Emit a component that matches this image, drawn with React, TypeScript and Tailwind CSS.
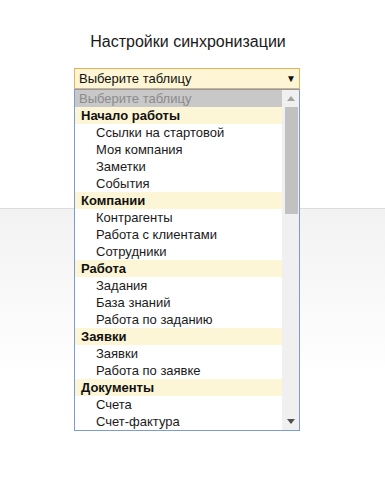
import React from "react";

type Row = { label: string; kind: "placeholder" | "group" | "item" };

const rows: Row[] = [
  { label: "Выберите таблицу", kind: "placeholder" },
  { label: "Начало работы", kind: "group" },
  { label: "Ссылки на стартовой", kind: "item" },
  { label: "Моя компания", kind: "item" },
  { label: "Заметки", kind: "item" },
  { label: "События", kind: "item" },
  { label: "Компании", kind: "group" },
  { label: "Контрагенты", kind: "item" },
  { label: "Работа с клиентами", kind: "item" },
  { label: "Сотрудники", kind: "item" },
  { label: "Работа", kind: "group" },
  { label: "Задания", kind: "item" },
  { label: "База знаний", kind: "item" },
  { label: "Работа по заданию", kind: "item" },
  { label: "Заявки", kind: "group" },
  { label: "Заявки", kind: "item" },
  { label: "Работа по заявке", kind: "item" },
  { label: "Документы", kind: "group" },
  { label: "Счета", kind: "item" },
  { label: "Счет-фактура", kind: "item" },
];

function RowView({ row }: { row: Row }) {
  if (row.kind === "placeholder") {
    return (
      <div className="h-[17px] leading-[17px] pl-[4px] bg-[#c8c8c8] text-[#8b8b8b] whitespace-nowrap">
        {row.label}
      </div>
    );
  }
  if (row.kind === "group") {
    return (
      <div className="h-[17px] leading-[17px] pl-[6px] bg-[#fdf6d6] font-bold text-[#111] whitespace-nowrap">
        {row.label}
      </div>
    );
  }
  return (
    <div className="h-[17px] leading-[17px] pl-[21px] text-[#1a1a1a] whitespace-nowrap">
      {row.label}
    </div>
  );
}

export default function App() {
  return (
    <div
      className="w-[385px] h-[486px] flex flex-col bg-white overflow-hidden"
      style={{ fontFamily: '"Liberation Sans", Arial, sans-serif' }}
    >
      <div className="h-[209px] shrink-0 border-b border-[#dcdcdc] bg-white">
        <div className="pt-[32px] pr-[9px] text-center text-[16px] leading-[20px] text-[#1a1a1a]">
          Настройки синхронизации
        </div>
        <div className="relative mt-[16px] ml-[74px] w-[226px]">
          <div className="h-[21px] border border-[#e6b35c] bg-[#fdf5d3] flex items-center justify-between pl-[4px] pr-[3px] text-[13px] text-[#111]">
            <span className="leading-[19px]">Выберите таблицу</span>
            <span className="text-[10px] leading-[19px] text-[#111]">▼</span>
          </div>
          <div className="absolute left-0 top-full w-[226px] h-[342px] border border-[#7b9bd6] bg-white flex z-10 text-[13px]">
            <div className="flex-1 flex flex-col overflow-hidden">
              {rows.map((r, i) => (
                <RowView key={i} row={r} />
              ))}
            </div>
            <div className="w-[17px] shrink-0 bg-[#f0f0f0] flex flex-col items-center">
              <div className="h-[17px] w-full flex items-center justify-center">
                <svg width="8" height="5" viewBox="0 0 8 5">
                  <polygon points="4,0 8,5 0,5" fill="#a3a3a3" />
                </svg>
              </div>
              <div className="w-[13px] h-[107px] bg-[#c1c1c1] ml-[1px]" />
              <div className="flex-1" />
              <div className="h-[17px] w-full flex items-center justify-center">
                <svg width="8" height="5" viewBox="0 0 8 5">
                  <polygon points="0,0 8,0 4,5" fill="#505050" />
                </svg>
              </div>
            </div>
          </div>
        </div>
      </div>
      <div className="flex-1 bg-gradient-to-b from-[#f2f2f2] to-white to-[60%]" />
    </div>
  );
}
